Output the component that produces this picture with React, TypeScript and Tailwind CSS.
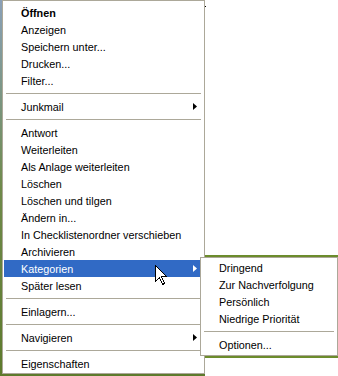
type Entry = { label: string; bold?: boolean; arrow?: boolean; active?: boolean } | "sep";

const mainItems: Entry[] = [
  { label: "Öffnen", bold: true },
  { label: "Anzeigen" },
  { label: "Speichern unter..." },
  { label: "Drucken..." },
  { label: "Filter..." },
  "sep",
  { label: "Junkmail", arrow: true },
  "sep",
  { label: "Antwort" },
  { label: "Weiterleiten" },
  { label: "Als Anlage weiterleiten" },
  { label: "Löschen" },
  { label: "Löschen und tilgen" },
  { label: "Ändern in..." },
  { label: "In Checklistenordner verschieben" },
  { label: "Archivieren" },
  { label: "Kategorien", arrow: true, active: true },
  { label: "Später lesen" },
  "sep",
  { label: "Einlagern..." },
  "sep",
  { label: "Navigieren", arrow: true },
  "sep",
  { label: "Eigenschaften" },
];

const subItems: Entry[] = [
  { label: "Dringend" },
  { label: "Zur Nachverfolgung" },
  { label: "Persönlich" },
  { label: "Niedrige Priorität" },
  "sep",
  { label: "Optionen..." },
];

const Arrow = ({ white }: { white?: boolean }) => (
  <svg width="4" height="7" viewBox="0 0 4 7" className="absolute right-[6px] top-[5px]">
    <path d="M0 0 L4 3.5 L0 7 Z" fill={white ? "#ffffff" : "#000000"} />
  </svg>
);

const MenuList = ({ entries }: { entries: Entry[] }) => (
  <div className="flex flex-col">
    {entries.map((e, i) =>
      e === "sep" ? (
        <div key={i} className="h-[9px] flex items-center px-[2px]">
          <div className="h-px w-full bg-[#aca899]" />
        </div>
      ) : (
        <div
          key={i}
          className={`relative h-[17px] pl-[17px] pr-[20px] leading-[18px] whitespace-nowrap ${
            e.active ? "bg-[#316ac5] text-white" : "text-black"
          } ${e.bold ? "font-bold" : ""}`}
        >
          {e.label}
          {e.arrow && <Arrow white={e.active} />}
        </div>
      )
    )}
  </div>
);

const Cursor = () => (
  <svg width="13" height="21" viewBox="0 0 13 21" className="absolute left-[155px] top-[265px]">
    <path
      d="M0.5 0.5 L0.5 16.5 L4.5 12.5 L7.5 19.5 L9.5 18.5 L6.5 11.5 L11.5 11.5 Z"
      fill="#ffffff"
      stroke="#000000"
      strokeWidth="1"
      shapeRendering="crispEdges"
    />
  </svg>
);

export default function App() {
  return (
    <div
      className="relative flex w-[338px] h-[376px] overflow-hidden bg-white text-[10.8px]"
      style={{ fontFamily: '"Liberation Sans", Arial, sans-serif' }}
    >
      {/* desktop edge on the left */}
      <div className="w-[2px] shrink-0 bg-gradient-to-b from-[#8aa0b8] via-[#6f8a4a] to-[#5d7a2c]" />

      {/* main context menu with desktop strip below */}
      <div className="flex flex-col w-[203px] shrink-0">
        <div className="border border-[#aca899] bg-white px-px pt-[3px] pb-px">
          <MenuList entries={mainItems} />
        </div>
        <div className="flex-1 bg-[#5d7a2c]" />
      </div>

      {/* window behind, to the right */}
      <div className="flex flex-col flex-1">
        <div className="h-[255px] flex">
          <div className="w-px h-px mt-[6px] bg-black" />
        </div>
        <div className="h-[2px] bg-[#6c8c2c]" />
        <div className="h-[99px]" />
        <div className="h-[2px] bg-[#6c8c2c]" />
        <div className="flex-1" />
      </div>

      {/* Kategorien submenu */}
      <div className="absolute left-[200px] top-[257px] w-[138px] border border-[#aca899] bg-white px-px pt-px pb-[2px]">
        <MenuList entries={subItems} />
      </div>

      <Cursor />
    </div>
  );
}
